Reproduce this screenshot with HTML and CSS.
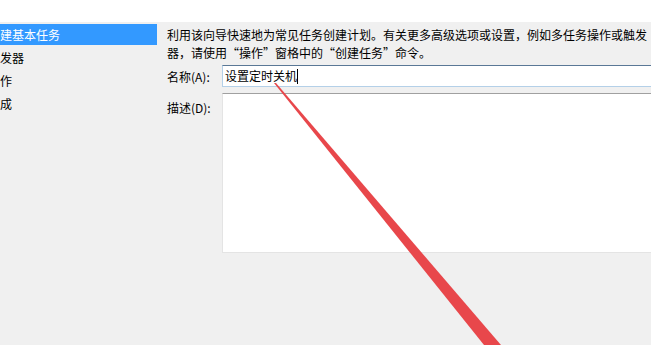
FILE: index.html
```html
<!DOCTYPE html>
<html lang="zh">

<head>
  <meta charset="UTF-8">
  <meta name="viewport" content="width=device-width, initial-scale=1.0">
  <title>创建基本任务向导</title>
  <link rel="stylesheet" href="styles.css">
</head>

<body>
  <div class="topbar"></div>

  <div class="wizard">
    <ul class="steps">
      <li class="active"><span>创建基本任务</span></li>
      <li><span>触发器</span></li>
      <li><span>操作</span></li>
      <li><span>完成</span></li>
    </ul>

    <div class="panel">
      <p class="intro">利用该向导快速地为常见任务创建计划。有关更多高级选项或设置，例如多任务操作或触发器，请使用“操作”窗格中的“创建任务”命令。</p>

      <div class="row">
        <label>名称(A):</label>
        <div class="textbox focused">设置定时关机<span class="caret"></span></div>
      </div>

      <div class="row desc">
        <label>描述(D):</label>
        <div class="textbox area"></div>
      </div>
    </div>
  </div>

  <!-- 标注箭头 -->
  <svg class="arrow" width="651" height="345" viewBox="0 0 651 345">
    <polygon points="274,83 276,83 501,345 484,345" fill="#e8474b" />
  </svg>
</body>

</html>
```

FILE: styles.css
```css
body {
  margin: 0;
  width: 651px;
  height: 345px;
  overflow: hidden;
  background: #f0f0f0;
  font-family: "Noto Sans CJK SC", sans-serif;
  font-size: 12px;
  color: #000;
  position: relative;
}

.topbar {
  height: 22px;
  background: #fff;
}

.wizard {
  display: flex;
}

.steps {
  list-style: none;
  margin: 0;
  padding: 2px 0 0;
  width: 157px;
  flex-shrink: 0;
  overflow: hidden;
}

.steps li {
  height: 21px;
  line-height: 21px;
  margin-bottom: 2px;
  white-space: nowrap;
}

.steps li span {
  margin-left: -12px;
}

.steps li.active {
  background: #3399ff;
  color: #fff;
}

.panel {
  flex: 1;
  padding: 4px 0 0 10px;
  overflow: hidden;
}

.intro {
  margin: 0 0 3px;
  max-width: 482px;
  line-height: 18px;
}

.row {
  display: flex;
  align-items: center;
}

.row label {
  width: 55px;
  flex-shrink: 0;
}

.textbox {
  flex: 1;
  background: #fff;
  box-sizing: border-box;
  margin-right: -20px;
}

.textbox.focused {
  height: 22px;
  line-height: 20px;
  padding-left: 2px;
  border: 1px solid #b4d0e8;
  border-top-color: #5a7896;
  white-space: nowrap;
}

.caret {
  display: inline-block;
  width: 1px;
  height: 15px;
  background: #000;
  vertical-align: -3px;
}

.row.desc {
  margin-top: 6px;
  align-items: flex-start;
}

.row.desc label {
  padding-top: 6px;
}

.textbox.area {
  height: 160px;
  border: 1px solid #e4e4e4;
  border-top-color: #a0a0a0;
}

.arrow {
  position: absolute;
  left: 0;
  top: 0;
}
```
